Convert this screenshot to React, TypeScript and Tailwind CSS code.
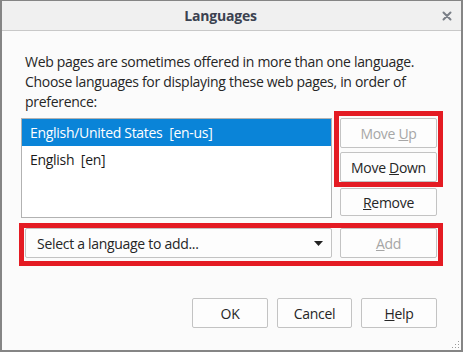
import React from "react";

const font = { fontFamily: '"Open Sans", "Noto Sans", sans-serif' };

function Btn({ children, disabled, className = "" }: { children: React.ReactNode; disabled?: boolean; className?: string }) {
  return (
    <div
      className={`flex items-center justify-center rounded-[2px] border border-[#c3c3c3] bg-[#fdfdfd] text-[14px] ${
        disabled ? "text-[#a6a6a6]" : "text-[#262626]"
      } ${className}`}
    >
      {children}
    </div>
  );
}

export default function App() {
  return (
    <div style={font} className="relative flex h-[352px] w-[463px] flex-col border-x-2 border-b-2 border-t border-[#858585] bg-[#fbfbfb] tracking-[-0.3px]">
      {/* Title bar */}
      <div className="relative flex h-[30px] shrink-0 items-center justify-center border-b border-[#c8c8c8] bg-[#f0f0f0] pr-[22px]">
        <span className="text-[14px] font-bold tracking-[-0.2px] text-[#3b4250]">Languages</span>
        <svg className="absolute right-[9px] top-[10px]" width="10" height="10" viewBox="0 0 10 10">
          <path d="M1.5 1.5 L8.5 8.5 M8.5 1.5 L1.5 8.5" stroke="#7a7f87" strokeWidth="2" strokeLinecap="round" />
        </svg>
      </div>

      {/* Content */}
      <div className="flex flex-1 flex-col pl-[19px] pr-[24px] pt-[21px]">
        <p className="pl-[4px] text-[14px] leading-[20px] text-[#262626]">
          Web pages are sometimes offered in more than one language.
          <br />
          Choose languages for displaying these web pages, in order of
          <br />
          preference:
        </p>

        <div className="mt-[6px] flex gap-[8px]">
          <div className="h-[100px] w-[311px] border border-[#b2b2b2] bg-white">
            <div className="flex h-[27px] items-center bg-[#0a84d8] pl-[8px] text-[14px] text-white">
              English/United States&nbsp;&nbsp;[en-us]
            </div>
            <div className="flex h-[27px] items-center pl-[8px] text-[14px] text-[#1a1a1a]">English&nbsp;&nbsp;[en]</div>
          </div>
          <div className="flex flex-1 flex-col gap-[4px]">
            <Btn disabled className="h-[30px]">
              Move&nbsp;<u>U</u>p
            </Btn>
            <Btn className="h-[30px]">
              Move&nbsp;<u>D</u>own
            </Btn>
            <Btn className="mt-[2px] h-[28px]">
              <u>R</u>emove
            </Btn>
          </div>
        </div>

        <div className="mt-[10px] flex gap-[8px]">
          <div className="ml-[4px] flex h-[30px] w-[307px] items-center justify-between rounded-[2px] border border-[#c3c3c3] bg-[#fdfdfd] pl-[11px] pr-[8px] text-[14px] text-[#262626]">
            <span>Select a language to add...</span>
            <svg width="9" height="5" viewBox="0 0 9 5">
              <path d="M0 0 H9 L4.5 5 Z" fill="#222" />
            </svg>
          </div>
          <Btn disabled className="h-[30px] flex-1">
            <u>A</u>dd
          </Btn>
        </div>

        <div className="mt-[40px] flex justify-end gap-[9px]">
          <Btn className="h-[30px] w-[76px]">OK</Btn>
          <Btn className="h-[30px] w-[75px]">Cancel</Btn>
          <Btn className="h-[30px] w-[76px]">
            <u>H</u>elp
          </Btn>
        </div>
      </div>

      {/* Annotation rectangles */}
      <div className="pointer-events-none absolute left-[332px] top-[110px] h-[76px] w-[109px] border-[5px] border-[#e41b23]" />
      <div className="pointer-events-none absolute left-[17px] top-[222px] h-[43px] w-[424px] border-[5px] border-[#e41b23]" />

      {/* Resize grip */}
      <svg className="absolute bottom-[1px] right-[1px]" width="8" height="8" viewBox="0 0 8 8">
        <rect x="6" y="0" width="1" height="1" fill="#9a9a9a" />
        <rect x="3" y="3" width="1" height="1" fill="#9a9a9a" />
        <rect x="6" y="3" width="1" height="1" fill="#9a9a9a" />
        <rect x="0" y="6" width="1" height="1" fill="#9a9a9a" />
        <rect x="3" y="6" width="1" height="1" fill="#9a9a9a" />
        <rect x="6" y="6" width="1" height="1" fill="#9a9a9a" />
      </svg>
    </div>
  );
}
